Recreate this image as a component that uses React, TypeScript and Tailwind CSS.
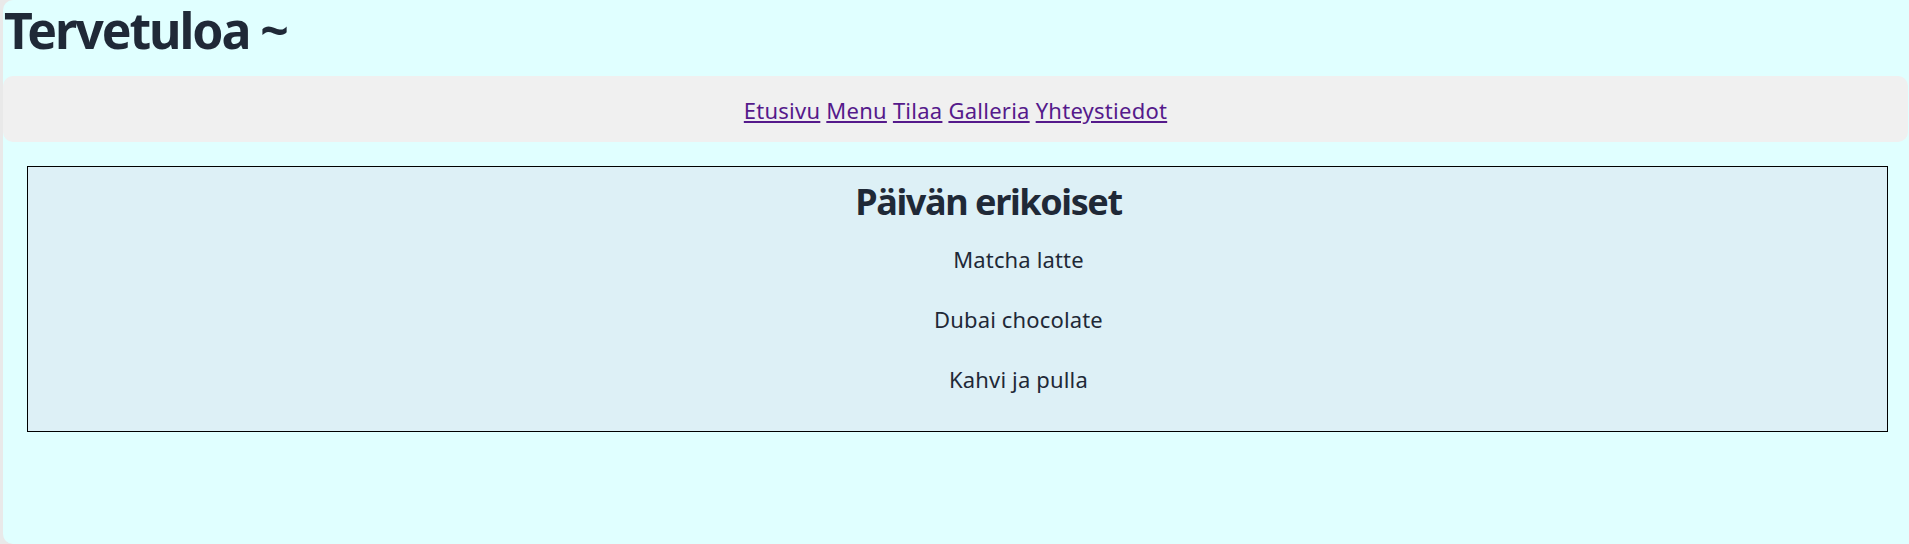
import React from "react";

export default function App() {
  const font = { fontFamily: '"Noto Sans", "Open Sans", sans-serif' };
  return (
    <div className="h-[544px] w-full overflow-hidden bg-[#e9e9e9] pl-[3px]" style={font}>
      <div className="h-full rounded-l-[10px] bg-[#e0ffff] text-[#1f2937]">
        <h1 className="pt-[2px] pl-[1px] text-[50px] font-bold leading-[56px] tracking-[-2.1px]">
          Tervetuloa ~
        </h1>
        <nav className="mt-[18px] mr-[1px] flex h-[66px] justify-center rounded-[10px] bg-[#f0f0f0] pt-[19px] text-[22px] leading-[30px] tracking-[0.25px]">
          <div className="flex gap-[6px]">
            <a href="#" className="text-[#551a8b] underline">Etusivu</a>
            <a href="#" className="text-[#551a8b] underline">Menu</a>
            <a href="#" className="text-[#551a8b] underline">Tilaa</a>
            <a href="#" className="text-[#551a8b] underline">Galleria</a>
            <a href="#" className="text-[#551a8b] underline">Yhteystiedot</a>
          </div>
        </nav>
        <section className="mt-[24px] ml-[24px] mr-[21px] border border-black bg-[#ddf0f6] pt-[13px] pb-[37px] text-center">
          <h2 className="pl-[62px] text-[36px] font-bold leading-[44px] tracking-[-1.4px]">
            Päivän erikoiset
          </h2>
          <div className="mt-[20px] flex flex-col gap-[30px] pl-[122px] text-[22px] leading-[30px] tracking-[0.15px]">
            <p>Matcha latte</p>
            <p>Dubai chocolate</p>
            <p>Kahvi ja pulla</p>
          </div>
        </section>
      </div>
    </div>
  );
}
